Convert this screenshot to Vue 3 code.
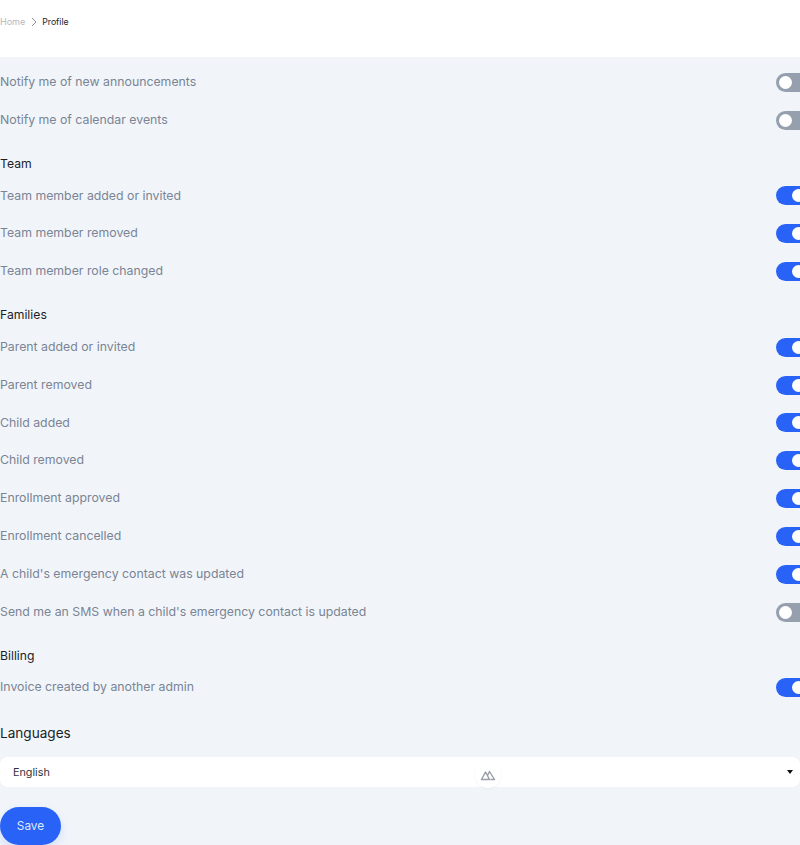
<script setup>
const sections = [
  { items: [
    { label: 'Notify me of new announcements', on: false },
    { label: 'Notify me of calendar events', on: false }
  ] },
  { title: 'Team', items: [
    { label: 'Team member added or invited', on: true },
    { label: 'Team member removed', on: true },
    { label: 'Team member role changed', on: true }
  ] },
  { title: 'Families', items: [
    { label: 'Parent added or invited', on: true },
    { label: 'Parent removed', on: true },
    { label: 'Child added', on: true },
    { label: 'Child removed', on: true },
    { label: 'Enrollment approved', on: true },
    { label: 'Enrollment cancelled', on: true },
    { label: "A child's emergency contact was updated", on: true },
    { label: "Send me an SMS when a child's emergency contact is updated", on: false }
  ] },
  { title: 'Billing', items: [
    { label: 'Invoice created by another admin', on: true }
  ] }
]
</script>

<template>
  <div class="page">
    <header class="top">
      <span class="crumb">Home</span>
      <svg class="chev" viewBox="0 0 8 10" width="8" height="10"><path d="M2 1l4 4-4 4" fill="none" stroke="#8a8f99" stroke-width="1"/></svg>
      <span class="crumb current">Profile</span>
    </header>
    <main class="main">
      <section v-for="(s, i) in sections" :key="i">
        <h3 v-if="s.title" class="heading">{{ s.title }}</h3>
        <div v-for="it in s.items" :key="it.label" class="row">
          <span class="label">{{ it.label }}</span>
          <span class="toggle" :class="{ on: it.on }"><span class="knob"></span></span>
        </div>
      </section>
      <h2 class="lang">Languages</h2>
      <div class="select">
        <span class="value">English</span>
        <span class="caret"></span>
        <span class="badge">
          <svg viewBox="0 0 16 12" width="16" height="12"><path d="M1.5 10.5L5.5 3l4 7.5zM7.5 6.5L9.5 2.5l5 8h-4" fill="none" stroke="#9a9ea6" stroke-width="1.4" stroke-linejoin="round"/></svg>
        </span>
      </div>
      <button class="save">Save</button>
    </main>
  </div>
</template>

<style scoped>
.page {
  width: 800px;
  height: 845px;
  overflow: hidden;
  background: #f1f5fa;
  font-family: Inter, "Noto Sans", sans-serif;
}
.top {
  height: 57px;
  background: #fff;
  display: flex;
  align-items: center;
  gap: 5px;
  padding-bottom: 14px;
  box-sizing: border-box;
}
.crumb { font-size: 9px; color: #b4b8c0; }
.crumb.current { font-size: 8.7px; color: #23262d; }
.chev { margin-right: -1px; }
.main { padding-top: 6.4px; }
.row {
  height: 37.85px;
  display: flex;
  align-items: center;
  justify-content: space-between;
  overflow: hidden;
}
.label { font-size: 12.3px; line-height: 16px; padding-bottom: 0.7px; color: #7a8494; }
.heading {
  margin: 0;
  height: 37.85px;
  box-sizing: border-box;
  padding-top: 17px;
  font-size: 12.2px;
  line-height: 16px;
  font-weight: 400;
  color: #1a1e26;
}
.toggle {
  flex: none;
  width: 24px;
  height: 19px;
  border-radius: 10px 0 0 10px;
  background: #959fae;
  position: relative;
  overflow: hidden;
}
.toggle.on { background: #2962f6; }
.knob {
  position: absolute;
  top: 3px;
  left: 3px;
  width: 13px;
  height: 13px;
  border-radius: 50%;
  background: #fff;
}
.toggle.on .knob { left: 16px; }
.lang {
  margin: 0;
  padding-top: 17.15px;
  font-size: 13.6px;
  line-height: 18px;
  font-weight: 400;
  color: #1a1e26;
}
.select {
  margin-top: 15px;
  height: 30px;
  border-radius: 8px;
  background: #fff;
  display: flex;
  align-items: center;
  justify-content: space-between;
  padding: 0 7px 0 13px;
  font-size: 10.8px;
  color: #30343c;
  position: relative;
}
.value { padding-top: 2px; }
.caret {
  width: 0;
  height: 0;
  border-left: 3.5px solid transparent;
  border-right: 3.5px solid transparent;
  border-top: 4px solid #111;
}
.badge {
  position: absolute;
  left: 475px;
  top: 5px;
  width: 26px;
  height: 26px;
  border-radius: 13px;
  background: #fff;
  box-shadow: 0 1px 3px rgba(30, 40, 60, 0.05);
  display: flex;
  align-items: center;
  justify-content: center;
}
.save {
  display: block;
  margin-top: 20px;
  width: 61px;
  height: 38px;
  border: 0;
  border-radius: 19px;
  background: #2962f6;
  color: #dfe8ff;
  font: inherit;
  font-size: 11.8px;
  box-shadow: 0 4px 10px rgba(41, 98, 246, 0.15);
}
</style>
